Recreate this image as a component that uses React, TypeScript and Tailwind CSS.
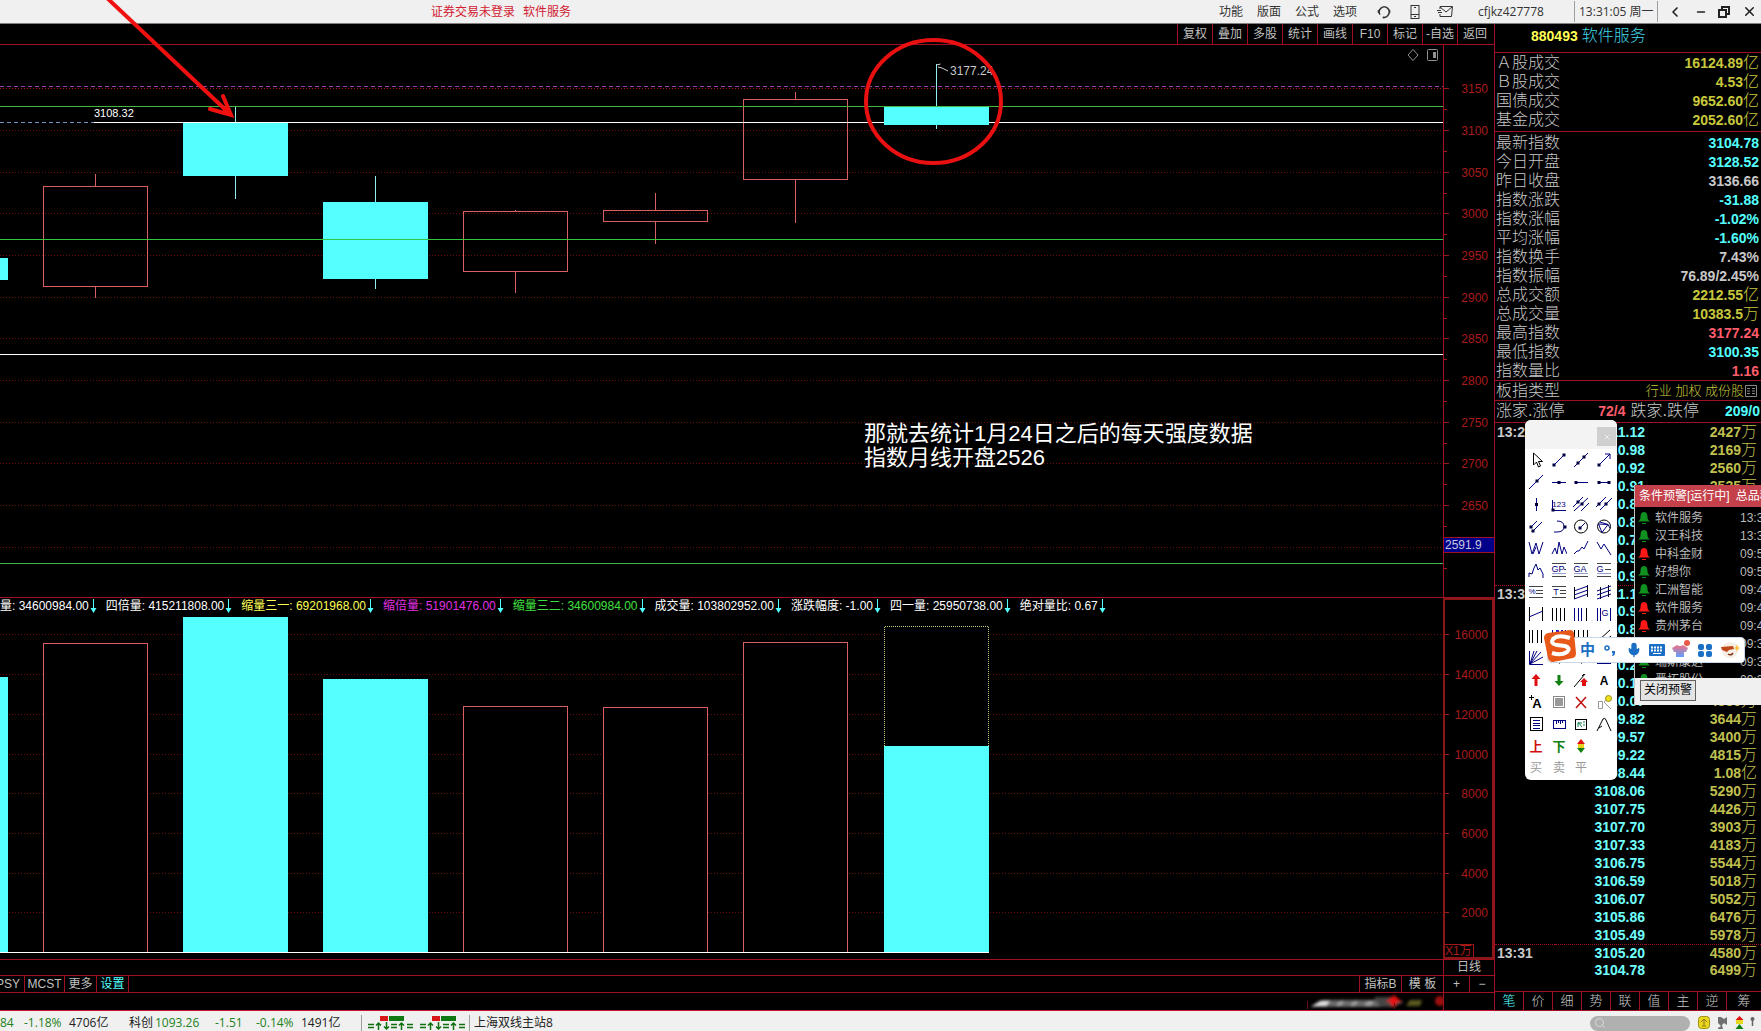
import { ReactNode } from "react";
import { X, Minus, ChevronLeft, Search, Mic } from "lucide-react";

const CYAN = "#54ffff";
const RED = "#d86060";

const menuItems = ["功能", "版面", "公式", "选项"];
const toolbarItems = ["复权", "叠加", "多股", "统计", "画线", "F10", "标记", "-自选", "返回"];

const turnover = [
  { name: "Ａ股成交", value: "16124.89", unit: "亿", color: "text-[#c8c83c]" },
  { name: "Ｂ股成交", value: "4.53", unit: "亿", color: "text-[#c8c83c]" },
  { name: "国债成交", value: "9652.60", unit: "亿", color: "text-[#c8c83c]" },
  { name: "基金成交", value: "2052.60", unit: "亿", color: "text-[#c8c83c]" },
];

const quotes = [
  { name: "最新指数", value: "3104.78", color: "text-[#54ffff]" },
  { name: "今日开盘", value: "3128.52", color: "text-[#54ffff]" },
  { name: "昨日收盘", value: "3136.66", color: "text-[#c8c8c8]" },
  { name: "指数涨跌", value: "-31.88", color: "text-[#54ffff]" },
  { name: "指数涨幅", value: "-1.02%", color: "text-[#54ffff]" },
  { name: "平均涨幅", value: "-1.60%", color: "text-[#54ffff]" },
  { name: "指数换手", value: "7.43%", color: "text-[#c8c8c8]" },
  { name: "指数振幅", value: "76.89/2.45%", color: "text-[#c8c8c8]" },
  { name: "总成交额", value: "2212.55", unit: "亿", color: "text-[#c8c83c]" },
  { name: "总成交量", value: "10383.5", unit: "万", color: "text-[#c8c83c]" },
  { name: "最高指数", value: "3177.24", color: "text-[#ff5c6c]" },
  { name: "最低指数", value: "3100.35", color: "text-[#54ffff]" },
  { name: "指数量比", value: "1.16", color: "text-[#ff5c6c]" },
];

const ticks = [
  { time: "13:29", price: "3111.12", amount: "2427", unit: "万" },
  { price: "3110.98", amount: "2169", unit: "万" },
  { price: "3110.92", amount: "2560", unit: "万" },
  { price: "3110.91", amount: "2535", unit: "万" },
  { price: "3110.88", amount: "3012", unit: "万" },
  { price: "3110.81", amount: "2874", unit: "万" },
  { price: "3110.79", amount: "3120", unit: "万" },
  { price: "3110.92", amount: "2688", unit: "万" },
  { price: "3110.98", amount: "2951", unit: "万" },
  { time: "13:30", price: "3111.12", amount: "3306", unit: "万" },
  { price: "3110.96", amount: "3540", unit: "万" },
  { price: "3110.83", amount: "2790", unit: "万" },
  { price: "3110.54", amount: "3105", unit: "万" },
  { price: "3110.28", amount: "4012", unit: "万" },
  { price: "3110.15", amount: "3867", unit: "万" },
  { price: "3110.07", amount: "4380", unit: "万" },
  { price: "3109.82", amount: "3644", unit: "万" },
  { price: "3109.57", amount: "3400", unit: "万" },
  { price: "3109.22", amount: "4815", unit: "万" },
  { price: "3108.44", amount: "1.08", unit: "亿" },
  { price: "3108.06", amount: "5290", unit: "万" },
  { price: "3107.75", amount: "4426", unit: "万" },
  { price: "3107.70", amount: "3903", unit: "万" },
  { price: "3107.33", amount: "4183", unit: "万" },
  { price: "3106.75", amount: "5544", unit: "万" },
  { price: "3106.59", amount: "5018", unit: "万" },
  { price: "3106.07", amount: "5052", unit: "万" },
  { price: "3105.86", amount: "6476", unit: "万" },
  { price: "3105.49", amount: "5978", unit: "万" },
  { time: "13:31", price: "3105.20", amount: "4580", unit: "万" },
  { price: "3104.78", amount: "6499", unit: "万" },
];

const indicators = [
  { text: "量: 34600984.00", color: "text-white" },
  { text: "四倍量: 415211808.00", color: "text-white" },
  { text: "缩量三一: 69201968.00", color: "text-[#ffff54]" },
  { text: "缩倍量: 51901476.00", color: "text-[#e030e0]" },
  { text: "缩量三二: 34600984.00", color: "text-[#40e040]" },
  { text: "成交量: 103802952.00", color: "text-white" },
  { text: "涨跌幅度: -1.00", color: "text-white" },
  { text: "四一量: 25950738.00", color: "text-white" },
  { text: "绝对量比: 0.67", color: "text-white" },
];

const alerts = [
  { name: "软件服务", time: "13:30", up: false },
  { name: "汉王科技", time: "13:30", up: false },
  { name: "中科金财", time: "09:50", up: true },
  { name: "好想你", time: "09:50", up: false },
  { name: "汇洲智能", time: "09:45", up: false },
  { name: "软件服务", time: "09:44", up: true },
  { name: "贵州茅台", time: "09:41", up: true },
  { name: "中国软件", time: "09:38", up: false },
  { name: "瑞斯康达", time: "09:36", up: false },
  { name: "晋拓股份", time: "09:35", up: false },
];

// x is the left edge, top/bottom the body, high/low the wick ends
const candles = [
  { x: -97, top: 213, bottom: 235, high: 213, low: 235, vol: 62, fill: true },
  { x: 43, top: 141, bottom: 241, high: 129, low: 253, vol: 28, fill: false },
  { x: 183, top: 78, bottom: 131, high: 62, low: 154, vol: 2, fill: true },
  { x: 323, top: 157, bottom: 234, high: 131, low: 244, vol: 64, fill: true },
  { x: 463, top: 166, bottom: 226, high: 165, low: 248, vol: 91, fill: false },
  { x: 603, top: 165, bottom: 176, high: 148, low: 199, vol: 92, fill: false },
  { x: 743, top: 54, bottom: 134, high: 47, low: 178, vol: 27, fill: false },
  { x: 884, top: 61, bottom: 80, high: 19, low: 84, vol: 131, fill: true },
];

const priceLevels = [3150, 3100, 3050, 3000, 2950, 2900, 2850, 2800, 2750, 2700, 2650, 2600];
const volLevels = [16000, 14000, 12000, 10000, 8000, 6000, 4000, 2000];

const priceY = (p: number) => Math.round(335 + (2800 - p) * 0.834);
const volY = (v: number) => Math.round(337 - (v / 2000) * 39.7);

function GridLine({ y, bright }: { y: number; bright?: boolean }) {
  return (
    <line x1="0" x2="100%" y1={y + 0.5} y2={y + 0.5} stroke={bright ? "#a01818" : "#6a0c0c"} strokeDasharray="1 2" />
  );
}

function HLine({ y, color, from = 0 }: { y: number; color: string; from?: number }) {
  return <line x1={from} x2="100%" y1={y + 0.5} y2={y + 0.5} stroke={color} />;
}

function PriceChart() {
  return (
    <svg className="block w-full h-[552px] overflow-visible" shapeRendering="crispEdges">
      {priceLevels.map((p) => (
        <GridLine key={p} y={priceY(p)} bright={p === 3150} />
      ))}
      <line x1="0" x2="100%" y1="41.500" y2="41.500" stroke="#a040b0" strokeDasharray="4 3" />
      <line x1="0" x2="94" y1="77.500" y2="77.500" stroke="#7090c0" strokeDasharray="4 3" />
      {candles.map((c) => (
        <g key={c.x}>
          <line x1={c.x + 52.5} x2={c.x + 52.5} y1={c.high} y2={c.top} stroke={c.fill ? "#90f0f0" : RED} />
          <line x1={c.x + 52.5} x2={c.x + 52.5} y1={c.bottom} y2={c.low} stroke={c.fill ? "#90f0f0" : RED} />
          {c.fill ? (
            <rect x={Math.max(c.x, -97)} y={c.top} width="105" height={c.bottom - c.top} fill={CYAN} />
          ) : (
            <rect x={c.x + 0.5} y={c.top + 0.5} width="104" height={c.bottom - c.top} fill="none" stroke={RED} />
          )}
        </g>
      ))}
      <HLine y={61} color="#40b840" />
      <line x1="94" x2="884" y1="77.500" y2="77.500" stroke="#ffffff" />
      <HLine y={77} color="#ffffff" from={989} />
      <HLine y={194} color="#30c840" />
      <HLine y={309} color="#ffffff" />
      <HLine y={518} color="#40b850" />
      <g shapeRendering="auto">
        <text x="94" y="72" fill="#fff" fontSize="11" fontFamily="Liberation Sans">3108.32</text>
        <path d="M936.500 20l4 -1M938 22l4 1l6 3" stroke="#d0d0d0" fill="none" />
        <text x="950" y="30" fill="#c8c8c8" fontSize="12" fontFamily="Liberation Sans">3177.24</text>
        <ellipse cx="933.500" cy="56.500" rx="67.500" ry="61.500" fill="none" stroke="#e81010" strokeWidth="4" />
      </g>
    </svg>
  );
}

function VolumeChart() {
  return (
    <svg className="block w-full h-[344px]" shapeRendering="crispEdges">
      {volLevels.map((v) => (
        <GridLine key={v} y={volY(v)} />
      ))}
      {candles.map((c) =>
        c.fill ? (
          <rect key={c.x} x={c.x} y={c.vol} width="105" height={337 - c.vol} fill={CYAN} />
        ) : (
          <rect key={c.x} x={c.x + 0.5} y={c.vol + 0.5} width="104" height={337 - c.vol} fill="#000" stroke={RED} />
        )
      )}
      <path d="M884.500 131V11.500H988.500V131" fill="#000" stroke="#c8c870" strokeDasharray="1 1" />
      <line x1="0" x2="989" y1="337.500" y2="337.500" stroke="#fff" />
    </svg>
  );
}

function DownArrow() {
  return (
    <svg className="w-[10px] h-[14px]" viewBox="0 0 10 14" fill={CYAN}>
      <path d="M4 0h1v9h2.500L4.500 14L1.500 9H4z" />
    </svg>
  );
}

const N = "#000080";

function Lines({ d, color = N }: { d: string; color?: string }) {
  return <path d={d} stroke={color} fill="none" />;
}

function Dots({ at }: { at: number[][] }) {
  return (
    <>
      {at.map(([x, y]) => (
        <rect key={`${x}-${y}`} x={x - 1.5} y={y - 1.5} width="3" height="3" fill="#000040" />
      ))}
    </>
  );
}

function Glyph({ children, x = 8, y = 12, size = 12, fill = "#000", bold = false }: {
  children: string; x?: number; y?: number; size?: number; fill?: string; bold?: boolean;
}) {
  return (
    <text x={x} y={y} fontSize={size} fill={fill} textAnchor="middle" fontWeight={bold ? 700 : 400}
      fontFamily="'Liberation Sans','Noto Sans CJK SC',sans-serif">
      {children}
    </text>
  );
}

const tools: { label: string; icon: ReactNode }[] = [
  { label: "选择", icon: <path d="M5.500 1v12l3-3 2 5 2-1-2-4.500h4z" fill="#fff" stroke="#000" /> },
  { label: "线段", icon: <><Lines d="M3 13L13 3" /><Dots at={[[3, 13], [13, 3]]} /></> },
  { label: "直线", icon: <><Lines d="M1 15L15 1" /><Dots at={[[5, 11], [11, 5]]} /></> },
  { label: "箭头", icon: <><Lines d="M3 13L14 2M9 2h5v5" /><Dots at={[[3, 13]]} /></> },
  { label: "射线", icon: <><Lines d="M1 15L15 1" /><Dots at={[[9, 7]]} /></> },
  { label: "水平直线", icon: <><Lines d="M1 8.500H15" /><Dots at={[[8, 8.5]]} /></> },
  { label: "水平射线", icon: <><Lines d="M2 8.500H15" /><Dots at={[[3, 8.5]]} /></> },
  { label: "水平线段", icon: <><Lines d="M2 8.500H14" /><Dots at={[[3, 8.5], [13, 8.5]]} /></> },
  { label: "垂直线", icon: <><Lines d="M8.500 2V15" /><Dots at={[[8.5, 8.5]]} /></> },
  { label: "数字", icon: <><Lines d="M1.500 4V14.500H15" /><Glyph x={8} y={11} size={8} fill={N}>123</Glyph><Dots at={[[2, 14]]} /></> },
  { label: "平行线", icon: <><Lines d="M0 11L10 1M1 15L15 2M8 15L16 7" /><Dots at={[[5, 6], [9, 8]]} /></> },
  { label: "平行射线", icon: <><Lines d="M0 11L10 1M4 14L16 2" /><Dots at={[[3, 8], [10, 8]]} /></> },
  { label: "平行线段", icon: <><Lines d="M3 9L9 3M4 14L14 4" /><Dots at={[[3, 9], [5, 13]]} /></> },
  { label: "圆弧", icon: <><Lines d="M6 3q7 0 7 5.500t-7 5.500M3 14h3" /><Dots at={[[14, 9]]} /></> },
  { label: "圆", icon: <><circle cx="8" cy="8.500" r="6.500" fill="none" stroke="#000" /><Lines d="M8 9l4-4" /><Dots at={[[7, 10]]} /></> },
  { label: "外接圆", icon: <><circle cx="8" cy="8.500" r="6.500" fill="none" stroke="#000" /><Lines d="M2.500 6L12 6.500L14 10M2.500 6L6 14.500L12 6.500M4 4l8 2.500" /></> },
  { label: "W形", icon: <Lines d="M1 2l3 12 4-11 3 11 4-12M5 14l3-7" /> },
  { label: "头肩", icon: <Lines d="M1 14l3-6 2 6 2-12 3 12 2-7 3 7" /> },
  { label: "上升", icon: <Lines d="M1 14l3-3h2l3-4 2 2 4-8" /> },
  { label: "下降", icon: <Lines d="M1 2l4 7 3-5 7 11" /> },
  { label: "波浪", icon: <Lines d="M1 15v-4l3 1 2-6 2-4 2 6 2-2 3 6v4" /> },
  { label: "GP线", icon: <><Lines d="M1 1.500h14M1 14.500h14M13 7.500h2" color="#444" /><Lines d="M1 11.500h14" color="#90a0d0" /><Glyph x={7} y={10} size={9} fill={N}>GP</Glyph></> },
  { label: "GA线", icon: <><Lines d="M1 1.500h14M1 14.500h14" color="#444" /><Lines d="M1 11.500h14" color="#90a0d0" /><Glyph x={7} y={10} size={9} fill={N}>GA</Glyph></> },
  { label: "G线", icon: <><Lines d="M1 1.500h14M1 14.500h14M9 7.500h6" color="#444" /><Lines d="M1 11.500h14" color="#90a0d0" /><Glyph x={4} y={10} size={9} fill={N}>G</Glyph></> },
  { label: "百分比线", icon: <><Lines d="M1 2.500h14M8 6.500h7M8 9.500h7M1 13.500h14" color="#444" /><Glyph x={4} y={10} size={8} fill={N}>%</Glyph></> },
  { label: "T线", icon: <><Lines d="M1 2.500h14M9 6.500h6M9 9.500h6M1 13.500h14" color="#444" /><Glyph x={5} y={11} size={9} fill={N}>T</Glyph></> },
  { label: "线性回归带", icon: <><Lines d="M1.500 3v12M14.500 1v12" color="#000" /><Lines d="M1 7l14-5M1 11l14-5M1 15l14-5" /></> },
  { label: "回归通道", icon: <><Lines d="M4.500 3v12M12.500 1v12" color="#000" /><Lines d="M1 7l14-5M1 11l14-5M1 15l14-5" /></> },
  { label: "回归线", icon: <><Lines d="M1.500 1v14M14.500 1v14" color="#000" /><Lines d="M1 11l14-6" /></> },
  { label: "周期线", icon: <Lines d="M1.500 2v13M5.500 2v13M9.500 2v13M13.500 2v13" color="#000" /> },
  { label: "费波纳契线", icon: <><Lines d="M1.500 2v13M5.500 2v13M8.500 2v13" /><Lines d="M13.500 2v13" color="#000" /></> },
  { label: "江恩时间", icon: <><Lines d="M1.500 2v13M4.500 2v13M14.500 2v13" /><Glyph x={9} y={10} size={9} fill={N}>G</Glyph></> },
  { label: "阴影线", icon: <Lines d="M1.500 2v13M4.500 2v13M9.500 2v13M13.500 2v13" color="#000" /> },
  { label: "时间线", icon: <><path d="M5 2h3v8H5zM10 2h2v8h-2z" fill="#2020d0" /><Lines d="M1.500 2v13M14.500 2v13" /></> },
  { label: "速阻线", icon: <Lines d="M1.500 2v13M5.500 2v13M10.500 2v13M14.500 2v13" color="#000" /> },
  { label: "斜线", icon: <Lines d="M3 12L14 2M9 13l6-5" color="#000" /> },
  { label: "江恩角度线", icon: <Lines d="M1.500 1v13.500H15M2 14L6 1M2 14L13 2M2 14l13-7M2 14L9 1" /> },
  { label: "标记点", icon: <path d="M6 10h5l-2.500 4z" fill="#000" /> },
  { label: "标记线", icon: <path d="M6 10h5l-2.500 4z" fill="#000" /> },
  { label: "矩形", icon: <rect x="1.500" y="3.500" width="13" height="10" fill="none" stroke={N} /> },
  { label: "涨标记", icon: <path d="M8 2l4.500 5h-3v7h-3V7h-3z" fill="#e01010" /> },
  { label: "跌标记", icon: <path d="M8 14l4.500-5h-3V3h-3v6h-3z" fill="#108010" /> },
  { label: "趋势标记", icon: <><Lines d="M1 15L12 2M9 4l2-2" color="#000" /><path d="M11 6l4 4h-2v4H9v-4H7z" fill="#e01010" /></> },
  { label: "文字", icon: <Glyph bold size={12} y={13}>A</Glyph> },
  { label: "加文字", icon: <><Glyph bold size={13} x={9} y={14}>A</Glyph><Lines d="M3.500 1v5M1 3.500h5" color="#000" /></> },
  { label: "色块", icon: <><rect x="2.500" y="2.500" width="11" height="11" fill="none" stroke="#888" /><rect x="4" y="4" width="8" height="8" fill="#999" /></> },
  { label: "删除", icon: <path d="M3 3l10 11M13 3L3 14" stroke="#c01010" strokeWidth="1.500" /> },
  { label: "隐藏", icon: <><path d="M2.500 7.500h4v7h-4zM8 8l7 7M8 8l5-5" fill="none" stroke="#999" /><circle cx="12.500" cy="4.500" r="3" fill="#f0e020" stroke="#a09010" /></> },
  { label: "列表", icon: <><rect x="2.500" y="1.500" width="12" height="13" fill="none" stroke="#000" /><Lines d="M5 4.500h7M5 7.500h7M5 9.500h7M5 12.500h7" /></> },
  { label: "标尺", icon: <><rect x="2.500" y="4.500" width="12" height="8" fill="none" stroke={N} /><Lines d="M5.500 5v3M7.500 5v2M9.500 5v3M11.500 5v2" /></> },
  { label: "截图", icon: <><rect x="2.500" y="3.500" width="11" height="10" fill="none" stroke="#000" /><path d="M5 6l4 5M5 11V7h4M10 6h2M10 9h2" stroke="#108050" fill="none" /></> },
  { label: "曲线", icon: <Lines d="M1 15L7 3q2-2 3 1l5 11M6 10l-3 2" color="#000" /> },
  { label: "上", icon: <Glyph bold size={13} y={13} fill="#d01010">上</Glyph> },
  { label: "下", icon: <Glyph bold size={13} y={13} fill="#108010">下</Glyph> },
  { label: "涨跌", icon: <><path d="M8 1l4 5H4z" fill="#e01010" /><path d="M5 6h6v4H5z" fill="#e8d020" /><path d="M8 15l4-5H4z" fill="#108010" /></> },
  { label: "空", icon: null },
  { label: "买", icon: <Glyph size={12} fill="#999">买</Glyph> },
  { label: "卖", icon: <Glyph size={12} fill="#999">卖</Glyph> },
  { label: "平", icon: <Glyph size={12} fill="#999">平</Glyph> },
];

function ToolBox() {
  return (
    <div className="absolute top-[420px] right-[144px] w-[92px] h-[360px] rounded-md bg-white overflow-hidden">
      <div className="h-[29px] bg-[#f3f3f3] flex justify-end pt-[7px] pr-px">
        <button aria-label="关闭画线工具" className="w-[19px] h-[19px] bg-[#cfcfcf] flex items-center justify-center text-white">
          <X className="w-2 h-2" />
        </button>
      </div>
      <div className="grid grid-cols-4 pr-[2px]">
        {tools.map((t) => (
          <button key={t.label} aria-label={t.label} className="h-[22px] flex items-center justify-center">
            <svg className="w-4 h-4" viewBox="0 0 16 16">{t.icon}</svg>
          </button>
        ))}
      </div>
    </div>
  );
}

function AlertPanel() {
  return (
    <div className="absolute top-[485px] right-0 w-[127px] h-[220px] border-l border-[#c0c0c0] bg-black overflow-hidden">
      <div className="h-[22px] bg-[#c4404a] text-white text-[12px] leading-[22px] pl-1 whitespace-nowrap">
        条件预警[运行中]<span className="pl-[6px]">总品种</span>
      </div>
      <ul className="h-[171px] pt-[2px] overflow-hidden">
        {alerts.map((a, i) => (
          <li key={i} className="h-[18px] flex items-center text-[12px] text-[#b8b8b8] whitespace-nowrap pl-[3px]">
            <svg className="w-3 h-3 mr-[5px] shrink-0" viewBox="0 0 12 12" fill={a.up ? "#ff1818" : "#109020"}>
              <path d="M6 0c3 0 3.500 3 3.500 5S10 8 12 9.500H0C2 8 2.500 7 2.500 5S3 0 6 0z" />
              <path d="M4 11h4v1H4z" />
            </svg>
            <span className="w-[85px] shrink-0">{a.name}</span>
            <span>{a.time}</span>
          </li>
        ))}
      </ul>
      <div className="h-[27px] bg-[#f0f0f0] pt-[2px] pl-[5px] flex items-start">
        <button className="w-[56px] h-[21px] border border-[#606060] bg-[#e4e4e4] text-black text-[12px] leading-[19px]">
          关闭预警
        </button>
      </div>
    </div>
  );
}

function ImeBar() {
  return (
    <div className="absolute top-[637px] right-[16px] w-[198px] h-[26px] rounded bg-white border border-[#c8d8e8] flex items-center text-[#1a6fc4]">
      <svg className="w-[32px] h-[32px] -ml-1 shrink-0 self-end" viewBox="0 0 32 32">
        <path d="M4 3l22-3q3 0 4 3l2 20q0 4-3 5L9 32q-4 0-5-4L0 8q0-4 4-5z" fill="#e85818" />
        <path d="M26 8Q14 4 9 9q-3 5 4 6l8 1q6 2 2 6-6 4-15 1" fill="none" stroke="#fff" strokeWidth="4" />
      </svg>
      <div className="flex-1 flex items-center justify-around">
        <button className="w-4 text-[15px] leading-4 font-bold">中</button>
        <button aria-label="标点">
          <svg className="w-4 h-4" viewBox="0 0 16 16">
            <circle cx="4" cy="6" r="2" fill="none" stroke="currentColor" strokeWidth="1.500" />
            <path d="M9 9h3v2q0 3-3 3l1-3H9z" fill="currentColor" />
          </svg>
        </button>
        <button aria-label="语音"><Mic className="w-4 h-4 fill-[#1a6fc4]" strokeWidth={2} /></button>
        <button aria-label="键盘">
          <svg className="w-4 h-4" viewBox="0 0 16 16">
            <rect y="2" width="16" height="12" rx="1" fill="currentColor" />
            <path d="M2 5.500h12M2 8.500h12" stroke="#fff" strokeWidth="2" strokeDasharray="2 1" />
            <path d="M4 11.500h8" stroke="#fff" />
          </svg>
        </button>
        <button aria-label="皮肤">
          <svg className="w-[18px] h-5" viewBox="0 0 18 20">
            <defs>
              <linearGradient id="skin" x2="0" y2="1">
                <stop stopColor="#f07080" />
                <stop offset="1" stopColor="#60a0ff" />
              </linearGradient>
            </defs>
            <path d="M5 5q3 2 6 0l5 3-2 4h-2v5H4v-5H2L0 8z" fill="url(#skin)" />
            <circle cx="15" cy="3" r="3" fill="#e85848" />
          </svg>
        </button>
        <button aria-label="工具箱">
          <svg className="w-4 h-4" viewBox="0 0 16 16" fill="currentColor">
            <rect x="1" y="2" width="6" height="6" rx="2" />
            <rect x="9" y="2" width="6" height="6" rx="2" />
            <rect x="1" y="9" width="6" height="6" rx="2" />
            <rect x="9" y="9" width="6" height="6" rx="2" />
          </svg>
        </button>
        <button aria-label="表情">
          <svg className="w-5 h-5" viewBox="0 0 20 20">
            <circle cx="10" cy="10" r="8" fill="#f6ede4" />
            <path d="M1 7l12-1 1 3-5 1-2 2-5-2z" fill="#c04818" />
            <path d="M8 14q3 2 5-1" stroke="#803010" fill="none" strokeWidth="1.500" />
            <path d="M17 4l1 3 2 1-2 1-1 3-1-3-2-1 2-1z" fill="#f8c040" />
          </svg>
        </button>
      </div>
    </div>
  );
}

function TitleBar() {
  return (
    <header className="h-6 shrink-0 bg-[#f0f0f0] border-b border-[#808080] flex items-center text-[12px] text-[#333] whitespace-nowrap font-['Open_Sans','Noto_Sans_CJK_SC',sans-serif]">
      <div className="flex-1 flex gap-2 pl-[431px] text-[#d02030]">
        <span>证券交易未登录</span>
        <span>软件服务</span>
      </div>
      <nav className="flex gap-[14px] pr-5">
        {menuItems.map((m) => (
          <button key={m}>{m}</button>
        ))}
      </nav>
      <button aria-label="客服" className="w-[33px]">
        <svg className="w-[14px] h-[14px]" viewBox="0 0 14 14" fill="none" stroke="currentColor" strokeWidth="1.500">
          <path d="M3 9.500A5 5 0 1 1 11.500 9.500Q10 12.500 7 12.500" />
          <path d="M1.500 5v3M12.500 5v3" />
          <circle cx="6.500" cy="12.500" r="1" fill="currentColor" stroke="none" />
        </svg>
      </button>
      <button aria-label="手机" className="w-[27px]">
        <svg className="w-[10px] h-[14px]" viewBox="0 0 10 14" fill="none" stroke="currentColor">
          <rect x="1" y="0.500" width="8" height="13" />
          <path d="M1 9.500h8M4 11.500h2M4 2.500h2" />
        </svg>
      </button>
      <button aria-label="邮件" className="w-[41px]">
        <svg className="w-4 h-3" viewBox="0 0 16 12" fill="none" stroke="currentColor">
          <path d="M3 3V.5h12.500l-1 10H3V8M3 1l6 5 6-5M0 4.500h4M1 6.500h4" />
        </svg>
      </button>
      <span className="w-[96px]">cfjkz427778</span>
      <time className="w-[84px] h-[21px] leading-[21px] border-x border-[#a0a0a0] pl-1">13:31:05 周一</time>
      <div className="flex items-center justify-between w-[103px] pl-[9px] pr-1 text-[#222]">
        <button aria-label="后退"><ChevronLeft className="w-4 h-4" strokeWidth={2.5} /></button>
        <button aria-label="最小化"><Minus className="w-3 h-3" strokeWidth={3} /></button>
        <button aria-label="还原">
          <svg className="w-3 h-3" viewBox="0 0 12 12" fill="none" stroke="currentColor" strokeWidth="2">
            <path d="M4 4V1h7v7H8M1 4h7v7H1z" />
          </svg>
        </button>
        <button aria-label="关闭"><X className="w-[15px] h-[15px]" strokeWidth={2.5} /></button>
      </div>
    </header>
  );
}

function PriceAxis() {
  return (
    <svg className="block w-[50px] h-[552px]" fontSize="12" fontFamily="Liberation Sans">
      {priceLevels.map((p) => (
        <g key={p}>
          <path d={`M0 ${priceY(p) + 0.5}h5M0 ${priceY(p) + 21.5}h3`} stroke="#a01818" />
          {p > 2600 && (
            <text x="44" y={priceY(p) + 5} textAnchor="end" fill="#a81c1c">{p}</text>
          )}
        </g>
      ))}
      <rect x="-1" y="492.500" width="52" height="15" fill="#00008b" stroke="#a01020" />
      <text x="1" y="504" fill="#c8c8e0">2591.9</text>
    </svg>
  );
}

function VolumeAxis() {
  return (
    <svg className="block w-full h-full" fontSize="12" fontFamily="'Liberation Sans','Noto Sans CJK SC'">
      {volLevels.map((v) => (
        <g key={v}>
          <path d={`M0 ${volY(v) + 15.5}h4`} stroke="#a01818" />
          <text x="43" y={volY(v) + 20} textAnchor="end" fill="#a81c1c">{v}</text>
        </g>
      ))}
      <path d="M0 344.500h28.500V360" fill="none" stroke="#a01818" />
      <text x="0" y="355" fill="#a81c1c">X1万</text>
    </svg>
  );
}

function ChartColumn() {
  return (
    <main className="flex-1 min-w-0 flex flex-col text-[12px] text-[#c0c0c0]">
      <div className="h-[21px] border-b border-[#a01020] flex justify-end pr-[2px]">
        {toolbarItems.map((t) => (
          <button key={t} className="w-[35px] border-l border-[#a01020] whitespace-nowrap">{t}</button>
        ))}
      </div>
      <div className="flex border-b border-[#a01020]">
        <div className="relative flex-1 min-w-0">
          <PriceChart />
          <p className="absolute left-[864px] top-[377px] text-[22px] leading-6 text-white whitespace-nowrap">
            那就去统计1月24日之后的每天强度数据
            <br />
            指数月线开盘2526
          </p>
          <svg className="absolute right-1 top-[3px] w-8 h-[14px]" viewBox="0 0 32 14" fill="none" stroke="#909090">
            <path d="M6 1.500l5 5.500-5 5.500L1 7z" />
            <rect x="20.500" y="1.500" width="10" height="11" rx="1" />
            <path d="M27.500 4v6" strokeWidth="3" />
          </svg>
        </div>
        <div className="w-[51px] border-l border-[#a01020]">
          <PriceAxis />
        </div>
      </div>
      <div className="flex border-b border-[#a01020]">
        <div className="flex-1 min-w-0">
          <div className="h-4 flex items-center overflow-hidden gap-[7px] whitespace-nowrap">
            {indicators.map((n) => (
              <span key={n.text} className="flex items-center">
                <span className={n.color}>{n.text}</span>
                <DownArrow />
              </span>
            ))}
          </div>
          <div className="pt-px">
            <VolumeChart />
          </div>
        </div>
        <div className="w-[51px] h-[361px] border-2 border-[#8b1818]">
          <VolumeAxis />
        </div>
      </div>
      <div className="h-4 border-b border-[#a01020] flex justify-end">
        <button className="w-[51px] border-l border-[#a01020] leading-[15px]">日线</button>
      </div>
      <div className="h-[17px] border-b border-[#a01020] flex leading-4">
        <button className="w-[25px] pr-1 flex justify-end border-r border-[#a01020]">PSY</button>
        <button className="w-10 border-r border-[#a01020]">MCST</button>
        <button className="w-8 border-r border-[#a01020]">更多</button>
        <button className="w-8 border-r border-[#a01020] text-[#54ffff]">设置</button>
        <div className="flex-1" />
        <button className="w-[42px] border-l border-[#a01020]">指标B</button>
        <button className="w-[42px] border-l border-[#a01020]">模 板</button>
        <button className="w-[26px] border-l border-[#a01020]">+</button>
        <button className="w-[25px] border-l border-[#a01020]">−</button>
      </div>
      <div className="flex-1 border-b border-[#d01030] flex justify-end">
        <svg className="w-[137px] h-4" viewBox="0 0 137 16">
          <defs>
            <filter id="smear"><feGaussianBlur stdDeviation="1.500" /></filter>
          </defs>
          <g filter="url(#smear)">
            <path d="M4 14L16 7h60l8 7z" fill="#6a6a6a" />
            <path d="M6 13L14 8h10l-4 5z" fill="#e0e0e0" />
            <path d="M30 13l4-5h4l-3 5zM44 13l4-5h4l-3 5zM58 13l4-5h6l-3 5z" fill="#a0a0a0" />
            <path d="M68 4l16 0 14 5-10 5H74z" fill="#444" />
            <path d="M88 2l8 7h-6v4h-5V9h-5z" fill="#e81010" />
            <path d="M100 13l4-6h12l-2 6z" fill="#5a5a20" />
            <circle cx="134" cy="8" r="5" fill="#a01010" />
          </g>
          <path d="M1.500 8v8M88.500 10v6" stroke="#700c10" />
        </svg>
        <div className="w-[51px] border-l border-[#a01020]" />
      </div>
    </main>
  );
}

function Stat({ name, value, unit, color }: { name: string; value: string; unit?: string; color: string }) {
  return (
    <div className="h-[19px] leading-[19px] flex justify-between pl-px pr-[2px]">
      <dt>{name}</dt>
      <dd className={color}>
        <span className="text-[14px] font-bold">{value}</span>
        {unit}
      </dd>
    </div>
  );
}

function QuotePanel() {
  return (
    <aside className="w-[267px] shrink-0 border-l border-[#a01020] flex flex-col text-[16px] font-light text-[#c8c8c8] whitespace-nowrap">
      <h1 className="h-[29px] leading-6 border-b border-[#a01020] pl-9">
        <span className="text-[14px] font-bold text-[#ffff54]">880493</span>
        <span className="pl-1 text-[#40d8e8]">软件服务</span>
      </h1>
      <dl className="h-[79px] border-b border-[#a01020]">
        {turnover.map((r) => (
          <Stat key={r.name} {...r} />
        ))}
      </dl>
      <dl className="h-[249px] pt-px border-b border-[#a01020]">
        {quotes.map((r) => (
          <Stat key={r.name} {...r} />
        ))}
      </dl>
      <div className="h-5 leading-[19px] border-b border-[#a01020] flex pl-px pr-1">
        <span className="flex-1">板指类型</span>
        <span className="text-[13px] text-[#c8c83c]">行业 加权 成份股</span>
        <svg className="w-3 h-3 mt-1 ml-px" viewBox="0 0 12 12" fill="none" stroke="#888">
          <path d="M.5.5h11v11H.5zM2 3.500h3M7 3.500h3M2 6h3M7 6h3M2 8.500h3M7 8.500h3" />
        </svg>
      </div>
      <div className="h-[22px] leading-5 border-b border-[#a01020] flex pl-px pr-px">
        <span>涨家.涨停</span>
        <span className="flex-1 text-right pr-[5px] text-[14px] font-bold text-[#ff5c6c]">72/4</span>
        <span>跌家.跌停</span>
        <span className="w-[61px] text-right text-[14px] font-bold text-[#54ffff]">209/0</span>
      </div>
      <table className="w-full border-collapse leading-4">
        <tbody>
          {ticks.map((t, i) => (
            <tr key={i} className={t.time && i > 0 ? "h-[17px] border-t border-dotted border-[#a01020]" : "h-[18px]"}>
              <td className="w-[60px] p-0 pl-[2px] text-[14px] font-bold">{t.time}</td>
              <td className="p-0 text-right text-[14px] font-bold text-[#70ffff]">{t.price}</td>
              <td className="w-[116px] p-0 pr-1 text-right text-[#c0c050]">
                <span className="text-[14px] font-bold">{t.amount}</span>
                {t.unit}
              </td>
            </tr>
          ))}
        </tbody>
      </table>
      <nav className="mt-auto h-5 border-t border-b border-[#a01020] flex text-[13px] leading-[18px]">
        {["笔", "价", "细", "势", "联", "值", "主", "逆", "筹"].map((t, i) => (
          <button key={t} className={i === 0 ? "w-7 text-[#54ffff]" : i === 8 ? "flex-1 border-l border-[#a01020]" : "w-[29px] border-l border-[#a01020]"}>
            {t}
          </button>
        ))}
      </nav>
    </aside>
  );
}

function MarketGauge() {
  return (
    <svg className="w-[46px] h-4" viewBox="0 0 46 16">
      <path d="M12 1h8v5h-8z" fill="#d81818" />
      <path d="M21 1h15v5H21z" fill="#107810" />
      <path
        d="M0 9.500h6M0 12.500h6M10.500 15V8M8 10.500l2.500-2.500 2.500 2.500M18.500 7v7M16 11.500l2.500 2.500 2.500-2.500M23 9.500h6M23 12.500h6M33.500 15V8M31 10.500l2.500-2.500 2.500 2.500M39 9.500h6M39 12.500h6"
        stroke="#107010" strokeWidth="1.500" fill="none"
      />
    </svg>
  );
}

function StatusBar() {
  return (
    <footer className="h-5 shrink-0 bg-[#f0f0f0] flex items-center pt-1 text-[12px] leading-4 text-[#222] whitespace-nowrap font-['Open_Sans','Noto_Sans_CJK_SC',sans-serif]">
      <span className="w-6 text-[#208020]">84</span>
      <span className="w-[45px] text-[#208020]">-1.18%</span>
      <span className="w-[60px]">4706亿</span>
      <span className="w-[26px]">科创</span>
      <span className="w-[60px] text-[#208020]">1093.26</span>
      <span className="w-[41px] text-[#208020]">-1.51</span>
      <span className="w-[45px] text-[#208020]">-0.14%</span>
      <span className="w-[60px]">1491亿</span>
      <div className="flex gap-[6px] pl-[6px] pr-[3px] border-l border-[#a0a0a0]">
        <MarketGauge />
        <MarketGauge />
      </div>
      <span className="flex-1 pl-1 border-l border-[#a0a0a0]">上海双线主站8</span>
      <label className="w-[100px] h-[15px] rounded-full bg-[#b0b0b0] flex items-center pl-1 mr-2">
        <Search className="w-3 h-3 text-[#d8d8d8]" />
        <input aria-label="搜索" className="w-20 h-3 bg-transparent outline-none" />
      </label>
      <svg className="w-[63px] h-4" viewBox="0 0 63 16">
        <rect x="0.500" y="1.500" width="11" height="12" rx="3" fill="#e8d820" stroke="#a09010" />
        <path d="M3 7l3-3 3 3M6 5v5M4 11h4" stroke="#907010" fill="none" />
        <path d="M20 2h3l3 2 3-2v8l-3-2-2 2 1 4h-5v-1l3-2-3-3z" fill="#707070" />
        <path d="M41.500 1l4 4h-8z" fill="#e01010" />
        <path d="M38 5h7v4h-7z" fill="#e8d820" />
        <path d="M41.500 9l4 5h-8z" fill="#108010" />
        <path d="M54.500 3v8" stroke="#666" strokeWidth="1.500" />
        <circle cx="54.500" cy="4" r="2" fill="#666" />
      </svg>
    </footer>
  );
}

export default function App() {
  return (
    <div className="relative min-h-screen flex flex-col bg-black overflow-hidden font-['Liberation_Sans','Noto_Sans_CJK_SC',sans-serif]">
      <TitleBar />
      <div className="flex-1 flex">
        <ChartColumn />
        <QuotePanel />
      </div>
      <StatusBar />

      <AlertPanel />
      <ToolBox />
      <ImeBar />
      {/* hand-drawn arrow pointing at the 3108.32 candle */}
      <svg className="absolute left-[100px] top-0 w-[140px] h-[124px] pointer-events-none" viewBox="0 0 140 124" fill="none" stroke="#f01010" strokeWidth="4" strokeLinecap="round">
        <path d="M6 -3L130 114M123 96l8 19-21-6" />
      </svg>
    </div>
  );
}
